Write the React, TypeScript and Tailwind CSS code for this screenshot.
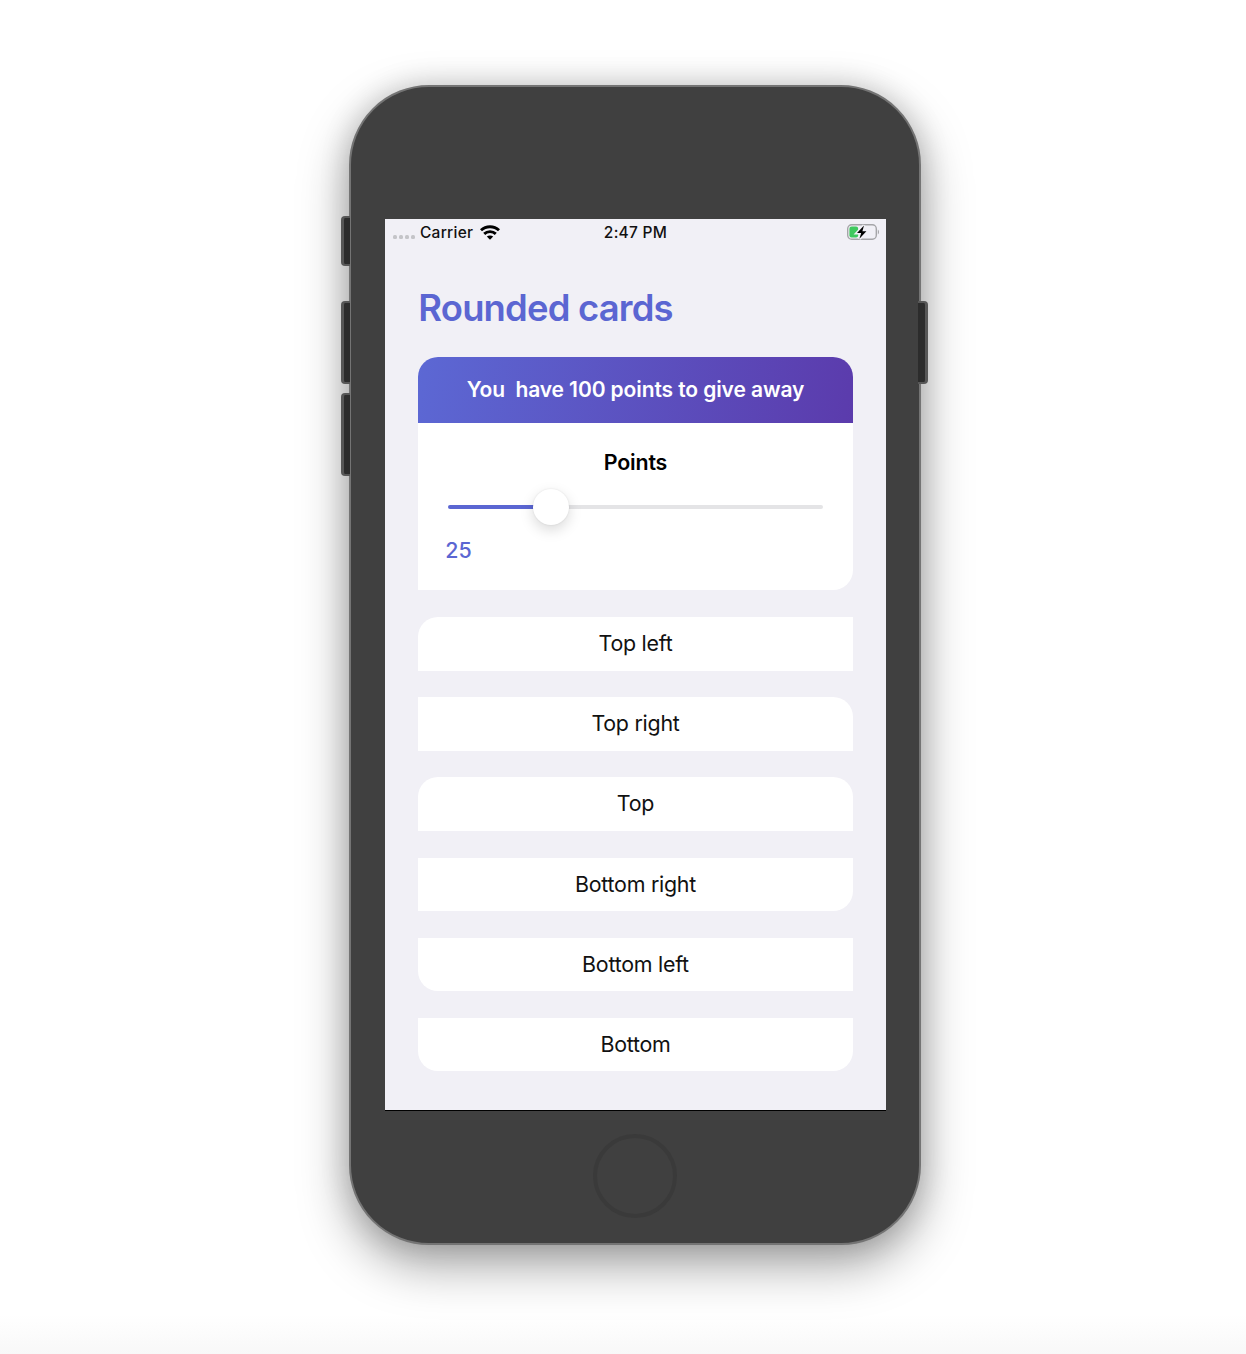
const cards = [
  { label: "Top left", corner: "rounded-tl-[20px]" },
  { label: "Top right", corner: "rounded-tr-[20px]" },
  { label: "Top", corner: "rounded-t-[20px]" },
  { label: "Bottom right", corner: "rounded-br-[20px]" },
  { label: "Bottom left", corner: "rounded-bl-[20px]" },
  { label: "Bottom", corner: "rounded-b-[20px]" },
];

function Wifi() {
  return (
    <svg width="20" height="15" viewBox="0 0 20 15" fill="none" stroke="#000" strokeWidth="2.9">
      <path d="M1 5.3C6 .6 14 .6 19 5.3" />
      <path d="M4.2 8.9C7.4 5.9 12.6 5.9 15.8 8.9" />
      <path d="M10 14.8 6.8 11.6C8.6 10 11.4 10 13.2 11.6Z" fill="#000" stroke="none" />
    </svg>
  );
}

function Battery() {
  return (
    <svg className="-mt-[2px]" width="34" height="18" viewBox="0 0 34 18" fill="none">
      <rect x="1.7" y="1.7" width="28.6" height="14.6" rx="4" stroke="#a5a5a8" strokeWidth="1.4" />
      <path d="M31.8 6.5c1.6.8 1.6 4.2 0 5z" fill="#a5a5a8" />
      <rect x="3.4" y="3.6" width="8.8" height="10.8" rx="2.2" fill="#3fc85e" />
      <path d="M18 2.4 11 10H15.2L13.4 15.8 20.4 8.2H16.4Z" fill="#000" stroke="#f1f0f6" strokeWidth="3" paintOrder="stroke" />
    </svg>
  );
}

function StatusBar() {
  return (
    <div className="grid h-[27px] grid-cols-3 items-center text-[15.5px] font-medium tracking-[0.25px] text-[#111]">
      <div className="flex items-center pl-2">
        <div className="mt-[9px] flex gap-[2px]">
          <span className="size-1 rounded-[1.5px] bg-[#c4c4c8]" />
          <span className="size-1 rounded-[1.5px] bg-[#c4c4c8]" />
          <span className="size-1 rounded-[1.5px] bg-[#c4c4c8]" />
          <span className="size-1 rounded-[1.5px] bg-[#c4c4c8]" />
        </div>
        <span className="ml-[5px] w-[60px]">Carrier</span>
        <Wifi />
      </div>
      <div className="text-center">2:47 PM</div>
      <div className="flex justify-end pr-[6px]">
        <Battery />
      </div>
    </div>
  );
}

function Slider() {
  return (
    <div className="mx-[30px] mt-[13px] flex h-9 items-center">
      <div className="h-1 w-[86px] rounded-l-full bg-[#5b66d2]" />
      <div className="z-10 -mx-px -mt-px size-9 shrink-0 rounded-full bg-white shadow-[0_5px_14px_rgba(0,0,0,0.15),0_0_2px_rgba(0,0,0,0.1)]" />
      <div className="h-1 flex-1 rounded-r-full bg-[#e4e4e6]" />
    </div>
  );
}

export default function App() {
  return (
    <div className="h-[1354px] w-[1246px] overflow-hidden bg-[linear-gradient(#fff_1315px,#f8f8f8_1354px)] pt-[85px] pl-[349px] font-['Inter',sans-serif]">
      <div className="relative h-[1160px] w-[572px] rounded-[80px] border-2 border-[#747474] bg-[#404040] px-[34px] pt-[132px] shadow-[0_20px_50px_rgba(0,0,0,0.36),0_0_30px_rgba(0,0,0,0.16)]">
        <span className="absolute top-[129px] -left-[10px] h-[50px] w-[9px] rounded-l-[4px] border-2 border-r-0 border-l-3 border-[#575757] bg-[#2c2c2c]" />
        <span className="absolute top-[214px] -left-[10px] h-[83px] w-[9px] rounded-l-[4px] border-2 border-r-0 border-l-3 border-[#575757] bg-[#2c2c2c]" />
        <span className="absolute top-[306px] -left-[10px] h-[83px] w-[9px] rounded-l-[4px] border-2 border-r-0 border-l-3 border-[#575757] bg-[#2c2c2c]" />
        <span className="absolute top-[214px] -right-[9px] h-[83px] w-[10px] rounded-r-[4px] border-2 border-r-3 border-l-0 border-[#575757] bg-[#2c2c2c]" />

        <div className="h-[892px] w-[501px] border-b border-black bg-[#f1f0f6] text-[21.4px] text-[#111]">
          <StatusBar />
          <div className="px-[33.3px] pt-[38px]">
            <h1 className="h-[48px] text-[36.4px] leading-[48px] font-semibold tracking-[-0.8px] whitespace-nowrap text-[#5b66d2]">
              Rounded cards
            </h1>
            <section className="mt-[25.3px] h-[233.2px] overflow-hidden rounded-t-[20px] rounded-br-[20px] bg-white">
              <div className="h-[66px] bg-[linear-gradient(100deg,#5c68d4,#5b3bac)] text-center text-[21px] leading-[66px] font-semibold tracking-[-0.1px] whitespace-pre text-white">
                {"You  have 100 points to give away"}
              </div>
              <div className="mt-[25px] text-center leading-[28px] font-semibold tracking-[-0.2px] text-black">Points</div>
              <Slider />
              <div className="mt-[11px] ml-[27px] leading-[28px] font-medium text-[#5b66d2]">25</div>
            </section>
            <div className="mt-[26.7px] flex flex-col gap-[26.75px] tracking-[-0.25px] [font-feature-settings:'calt'_0]">
              {cards.map((card) => (
                <div key={card.label} className={`h-[53.4px] bg-white text-center leading-[53px] ${card.corner}`}>
                  {card.label}
                </div>
              ))}
            </div>
          </div>
        </div>
        <div className="mx-auto mt-[23px] size-[84px] rounded-full border-4 border-[#3a3a3a]" />
      </div>
    </div>
  );
}
